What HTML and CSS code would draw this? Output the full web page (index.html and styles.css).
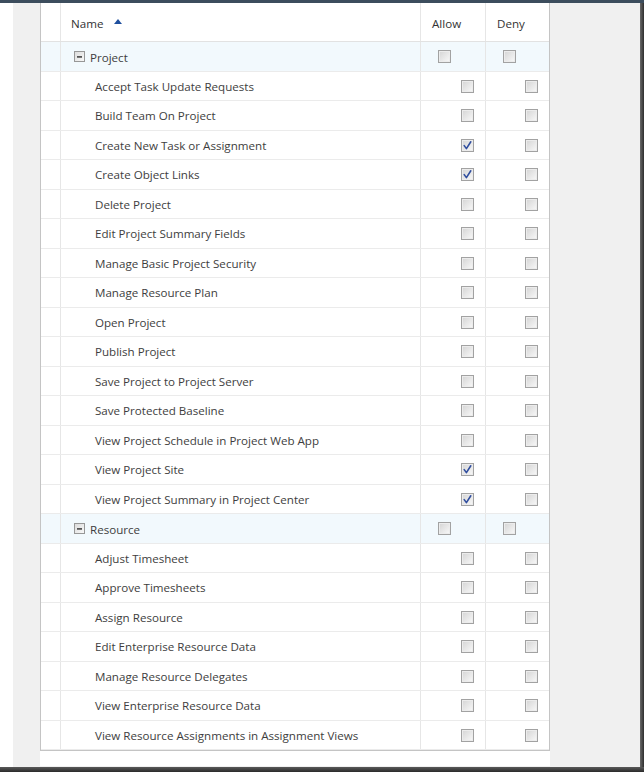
FILE: index.html
```html
<!DOCTYPE html>
<html>
<head>
<meta charset="utf-8">
<link rel="stylesheet" href="styles.css">
</head>
<body>
<div class="shot">
  <div class="topbar"></div>
  <div class="mid">
    <div class="gutter"></div>
    <div class="window">
      <div class="panel">
        <div class="grid">
          <div class="row head">
            <div class="c c0"></div>
            <div class="c cn"><span class="htext">Name</span><span class="sort"></span></div>
            <div class="c ca"><span class="htext">Allow</span></div>
            <div class="c cd"><span class="htext">Deny</span></div>
          </div>

          <div class="row group">
            <div class="c c0"></div>
            <div class="c cn"><span class="exp"></span><span class="gname">Project</span></div>
            <div class="c ca"><span class="cb"></span></div>
            <div class="c cd"><span class="cb"></span></div>
          </div>
          <div class="row item"><div class="c c0"></div><div class="c cn">Accept Task Update Requests</div><div class="c ca"><span class="cb"></span></div><div class="c cd"><span class="cb"></span></div></div>
          <div class="row item"><div class="c c0"></div><div class="c cn">Build Team On Project</div><div class="c ca"><span class="cb"></span></div><div class="c cd"><span class="cb"></span></div></div>
          <div class="row item"><div class="c c0"></div><div class="c cn">Create New Task or Assignment</div><div class="c ca"><span class="cb on"><svg viewBox="0 0 11 11"><path d="M2.2 5.6 L4.4 8.6 L8.8 1.8"/></svg></span></div><div class="c cd"><span class="cb"></span></div></div>
          <div class="row item"><div class="c c0"></div><div class="c cn">Create Object Links</div><div class="c ca"><span class="cb on"><svg viewBox="0 0 11 11"><path d="M2.2 5.6 L4.4 8.6 L8.8 1.8"/></svg></span></div><div class="c cd"><span class="cb"></span></div></div>
          <div class="row item"><div class="c c0"></div><div class="c cn">Delete Project</div><div class="c ca"><span class="cb"></span></div><div class="c cd"><span class="cb"></span></div></div>
          <div class="row item"><div class="c c0"></div><div class="c cn">Edit Project Summary Fields</div><div class="c ca"><span class="cb"></span></div><div class="c cd"><span class="cb"></span></div></div>
          <div class="row item"><div class="c c0"></div><div class="c cn">Manage Basic Project Security</div><div class="c ca"><span class="cb"></span></div><div class="c cd"><span class="cb"></span></div></div>
          <div class="row item"><div class="c c0"></div><div class="c cn">Manage Resource Plan</div><div class="c ca"><span class="cb"></span></div><div class="c cd"><span class="cb"></span></div></div>
          <div class="row item"><div class="c c0"></div><div class="c cn">Open Project</div><div class="c ca"><span class="cb"></span></div><div class="c cd"><span class="cb"></span></div></div>
          <div class="row item"><div class="c c0"></div><div class="c cn">Publish Project</div><div class="c ca"><span class="cb"></span></div><div class="c cd"><span class="cb"></span></div></div>
          <div class="row item"><div class="c c0"></div><div class="c cn">Save Project to Project Server</div><div class="c ca"><span class="cb"></span></div><div class="c cd"><span class="cb"></span></div></div>
          <div class="row item"><div class="c c0"></div><div class="c cn">Save Protected Baseline</div><div class="c ca"><span class="cb"></span></div><div class="c cd"><span class="cb"></span></div></div>
          <div class="row item"><div class="c c0"></div><div class="c cn">View Project Schedule in Project Web App</div><div class="c ca"><span class="cb"></span></div><div class="c cd"><span class="cb"></span></div></div>
          <div class="row item"><div class="c c0"></div><div class="c cn">View Project Site</div><div class="c ca"><span class="cb on"><svg viewBox="0 0 11 11"><path d="M2.2 5.6 L4.4 8.6 L8.8 1.8"/></svg></span></div><div class="c cd"><span class="cb"></span></div></div>
          <div class="row item"><div class="c c0"></div><div class="c cn">View Project Summary in Project Center</div><div class="c ca"><span class="cb on"><svg viewBox="0 0 11 11"><path d="M2.2 5.6 L4.4 8.6 L8.8 1.8"/></svg></span></div><div class="c cd"><span class="cb"></span></div></div>

          <div class="row group">
            <div class="c c0"></div>
            <div class="c cn"><span class="exp"></span><span class="gname">Resource</span></div>
            <div class="c ca"><span class="cb"></span></div>
            <div class="c cd"><span class="cb"></span></div>
          </div>
          <div class="row item"><div class="c c0"></div><div class="c cn">Adjust Timesheet</div><div class="c ca"><span class="cb"></span></div><div class="c cd"><span class="cb"></span></div></div>
          <div class="row item"><div class="c c0"></div><div class="c cn">Approve Timesheets</div><div class="c ca"><span class="cb"></span></div><div class="c cd"><span class="cb"></span></div></div>
          <div class="row item"><div class="c c0"></div><div class="c cn">Assign Resource</div><div class="c ca"><span class="cb"></span></div><div class="c cd"><span class="cb"></span></div></div>
          <div class="row item"><div class="c c0"></div><div class="c cn">Edit Enterprise Resource Data</div><div class="c ca"><span class="cb"></span></div><div class="c cd"><span class="cb"></span></div></div>
          <div class="row item"><div class="c c0"></div><div class="c cn">Manage Resource Delegates</div><div class="c ca"><span class="cb"></span></div><div class="c cd"><span class="cb"></span></div></div>
          <div class="row item"><div class="c c0"></div><div class="c cn">View Enterprise Resource Data</div><div class="c ca"><span class="cb"></span></div><div class="c cd"><span class="cb"></span></div></div>
          <div class="row item"><div class="c c0"></div><div class="c cn">View Resource Assignments in Assignment Views</div><div class="c ca"><span class="cb"></span></div><div class="c cd"><span class="cb"></span></div></div>
        </div>
      </div>
    </div>
    <div class="rshadow"></div>
  </div>
  <div class="bshadow"></div>
</div>
</body>
</html>
```

FILE: styles.css
```css
* { box-sizing: border-box; }
html, body { margin: 0; padding: 0; background: #fff; }
body {
  font-family: "Open Sans", "Noto Sans", "Liberation Sans", sans-serif;
  font-size: 11.6px;
  color: #3e3e3e;
}
.shot { width: 644px; height: 772px; display: flex; flex-direction: column; overflow: hidden; }
.topbar { height: 3px; background: #3c4d5d; flex: none; }
.mid { height: 764px; display: flex; flex: none; }
.gutter { width: 13px; background: #fff; flex: none; }
.window { width: 627px; background: #f0f0f0; padding-left: 27px; flex: none; }
.rshadow { width: 4px; background: linear-gradient(to right, #6a6a6a, #2e2e2e); flex: none; }
.bshadow { height: 5px; background: linear-gradient(to bottom, #5a5a5a, #2a2a2a); flex: none; }
.panel { width: 510px; height: 763px; background: #fff; }
.grid {
  width: 510px;
  border-left: 1px solid #c4c4c4;
  border-right: 1px solid #c4c4c4;
  border-bottom: 1px solid #c4c4c4;
}
.row { display: grid; grid-template-columns: 20px 360px 65px 63px; border-bottom: 1px solid #ebebeb; }
.row .c { border-right: 1px solid #e6e6e6; display: flex; align-items: center; }
.row .cd { border-right: none; }
.head { height: 39px; border-bottom-color: #e2e2e2; }
.head .c { padding-top: 2px; }
.head .htext { color: #333; }
.head .cn { padding-left: 10px; }
.head .ca, .head .cd { padding-left: 11px; }
.sort {
  width: 0; height: 0; margin-left: 11px; margin-top: -3px;
  border-left: 4px solid transparent; border-right: 4px solid transparent;
  border-bottom: 5px solid #1f4f9e;
}
.item:nth-child(odd), .group:nth-child(odd) { height: 29px; }
.item:nth-child(even), .group:nth-child(even) { height: 30px; }
.item .cn { padding-left: 34px; }
.item .ca, .item .cd { justify-content: flex-end; padding-right: 11px; }
.group { background: #f2f9fd; }
.group .cn { padding-left: 13px; padding-top: 2px; }
.group .ca, .group .cd { padding-left: 17px; }
.gname { margin-left: 5px; }
.exp {
  width: 11px; height: 11px; border: 1px solid #979797; position: relative; margin-top: -3px;
  background: linear-gradient(135deg, #dcdcdc, #f8f8f8);
}
.exp::after { content: ""; position: absolute; left: 2px; right: 2px; top: 4px; height: 1px; background: #555; box-shadow: 0 1px 0 #777; }
.cb {
  width: 13px; height: 13px; border: 1px solid #a2a2a2; display: inline-block;
  background: linear-gradient(135deg, #d4d4d4, #f9f9f9);
  box-shadow: inset 0 0 0 1px #ececec;
}
.cb svg { display: block; width: 11px; height: 11px; }
.cb svg path { fill: none; stroke: #2f4d9e; stroke-width: 1.6; stroke-linecap: round; stroke-linejoin: round; }
```
